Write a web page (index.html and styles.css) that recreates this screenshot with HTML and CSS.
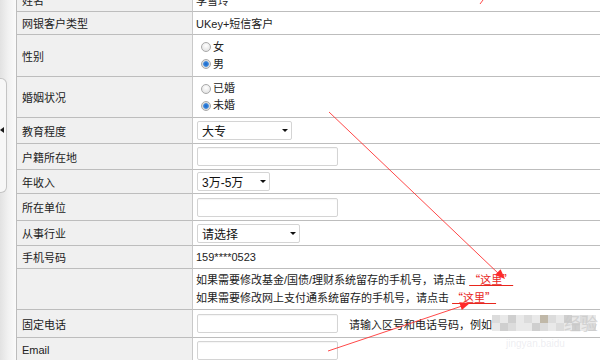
FILE: index.html
```html
<!DOCTYPE html>
<html lang="zh-CN">
<head>
<meta charset="utf-8">
<title>个人信息</title>
<link rel="stylesheet" href="styles.css">
</head>
<body>
<div class="page">
  <div class="side"><div class="tab"><span class="tab-arrow"></span></div></div>
  <div class="form">
    <div class="lbl">姓名</div><div class="val">李雪玲</div>
    <div class="lbl">网银客户类型</div><div class="val">UKey+短信客户</div>
    <div class="lbl">性别</div>
    <div class="val stack">
      <div class="radio"><span class="dot"></span>女</div>
      <div class="radio"><span class="dot on"></span>男</div>
    </div>
    <div class="lbl">婚姻状况</div>
    <div class="val stack">
      <div class="radio"><span class="dot"></span>已婚</div>
      <div class="radio"><span class="dot on"></span>未婚</div>
    </div>
    <div class="lbl">教育程度</div>
    <div class="val"><div class="select w95"><span>大专</span><span class="caret"></span></div></div>
    <div class="lbl">户籍所在地</div>
    <div class="val"><div class="input"></div></div>
    <div class="lbl">年收入</div>
    <div class="val"><div class="select w73"><span>3万-5万</span><span class="caret"></span></div></div>
    <div class="lbl">所在单位</div>
    <div class="val"><div class="input"></div></div>
    <div class="lbl">从事行业</div>
    <div class="val"><div class="select w103"><span>请选择</span><span class="caret"></span></div></div>
    <div class="lbl">手机号码</div><div class="val">159****0523</div>
    <div class="lbl"></div>
    <div class="val stack notes">
      <div>如果需要修改基金/国债/理财系统留存的手机号，请点击 <a class="here">“这里”</a></div>
      <div>如果需要修改网上支付通系统留存的手机号，请点击 <a class="here">“这里”</a></div>
    </div>
    <div class="lbl">固定电话</div>
    <div class="val"><div class="input"></div><span class="hint">请输入区号和电话号码，例如</span></div>
    <div class="lbl">Email</div>
    <div class="val"><div class="input"></div></div>
  </div>
</div>
<div class="watermark">
  <div class="mosaic">
    <span class="m2"></span><span class="m1"></span><span class="m3"></span><span class="m1"></span><span class="m2"></span><span class="m1"></span><span class="m4"></span><span class="m2"></span><span class="m1"></span><span class="m3"></span><span class="m1"></span><span class="m2"></span><span class="m1"></span>
    <span class="m1"></span><span class="m3"></span><span class="m2"></span><span class="m1"></span><span class="m1"></span><span class="m3"></span><span class="m2"></span><span class="m1"></span><span class="m2"></span><span class="m1"></span><span class="m3"></span><span class="m1"></span><span class="m2"></span>
  </div>
  <span class="wm-big">经验</span>
  <span class="wm-small">jingyan.baidu</span>
</div>
<svg class="marks" width="600" height="360" viewBox="0 0 600 360">
  <g stroke="#ff2a2a" stroke-width="1" fill="none" opacity="0.85">
    <line x1="483" y1="0" x2="480" y2="4"/>
    <line x1="329" y1="112" x2="500" y2="275"/>
    <line x1="328" y1="351" x2="462" y2="306"/>
  </g>
  <polygon points="505,279 495,275 500.6,269.2" fill="#ff2a2a"/>
  <polygon points="470,303 461.8,309.9 459.2,302.3" fill="#ff2a2a"/>
</svg>
</body>
</html>
```

FILE: styles.css
```css
html, body {
  margin: 0;
  padding: 0;
}
body {
  width: 600px;
  height: 360px;
  overflow: hidden;
  position: relative;
  background: #fff;
  font-family: "Liberation Sans", "Noto Sans CJK SC", sans-serif;
  font-size: 11px;
  color: #222;
}
.page {
  display: flex;
  height: 360px;
  overflow: hidden;
}
.side {
  width: 16px;
  flex: none;
  background: linear-gradient(to right, #e2e2e2 0, #f1f1f1 8px, #fbfbfb 16px);
  display: flex;
  flex-direction: column;
}
.tab {
  margin-top: 78px;
  width: 7px;
  height: 115px;
  box-sizing: border-box;
  border: 1px solid #c4c4c4;
  border-left: none;
  border-radius: 0 6px 6px 0;
  background: #f7f7f7;
  display: flex;
  flex-direction: column;
}
.tab-arrow {
  margin-top: 48px;
  width: 0;
  height: 0;
  border-right: 4px solid #1a1a1a;
  border-top: 3.5px solid transparent;
  border-bottom: 3.5px solid transparent;
}
.form {
  flex: 1;
  align-self: flex-start;
  margin-top: -11px;
  display: grid;
  grid-template-columns: 176px 1fr;
  grid-template-rows: 23px 23px 42px 41px 26px 26px 24px 27px 25px 23px 41px 28px 25px;
  border-left: 1px solid #bdbdbd;
}
.lbl, .val {
  box-sizing: border-box;
  border-bottom: 1px solid #bdbdbd;
  display: flex;
  align-items: center;
}
.lbl {
  background: #f0f0f0;
  border-right: 1px solid #c9c9c9;
  padding-left: 5px;
}
.val {
  padding-left: 3px;
}
.stack {
  flex-direction: column;
  align-items: flex-start;
  justify-content: center;
  line-height: 17px;
}
.radio {
  display: flex;
  align-items: center;
  padding-left: 5px;
  font-size: 11px;
}
.dot {
  width: 10px;
  height: 10px;
  box-sizing: border-box;
  border-radius: 50%;
  border: 1px solid #a9a9a9;
  background: radial-gradient(circle at 50% 35%, #ffffff 0, #e4e4e4 5px);
  margin-right: 2px;
}
.dot.on {
  background: radial-gradient(circle at 50% 50%, #1a63c4 0, #3b8ae0 2.4px, #d8d8d8 3.2px, #f3f3f3 5px);
}
.input {
  width: 141px;
  height: 19px;
  box-sizing: border-box;
  margin-left: 1px;
  border: 1px solid #d4d4d4;
  border-radius: 2px;
  box-shadow: inset 0 1px 1px rgba(0, 0, 0, 0.04);
}
.select {
  height: 19px;
  box-sizing: border-box;
  margin-left: 1px;
  border: 1px solid #d4d4d4;
  border-radius: 2px;
  display: flex;
  align-items: center;
  justify-content: space-between;
  padding: 0 3px 0 4px;
  font-size: 12px;
  color: #111;
}
.w95 { width: 95px; }
.w73 { width: 73px; }
.w103 { width: 103px; }
.caret {
  width: 0;
  height: 0;
  border-left: 3px solid transparent;
  border-right: 3px solid transparent;
  border-top: 3.5px solid #111;
}
.notes {
  color: #222;
}
.here {
  color: #e8261c;
  text-decoration: underline;
  font-family: "Noto Sans CJK SC", sans-serif;
}
.hint {
  margin-left: 11px;
  color: #222;
}
.watermark {
  position: absolute;
  left: 492px;
  top: 300px;
  width: 108px;
  height: 60px;
  pointer-events: none;
}
.mosaic {
  position: absolute;
  left: 0;
  top: 15px;
  display: grid;
  grid-template-columns: repeat(13, 8px);
  grid-auto-rows: 8px;
}
.m1 { background: #e9e9e9; }
.m2 { background: #dcdcdc; }
.m3 { background: #cfcfcf; }
.m4 { background: #c0b8a8; }
.wm-big {
  position: absolute;
  left: 72px;
  top: 10px;
  font-family: "Noto Sans CJK SC", sans-serif;
  font-size: 17px;
  color: rgba(200, 200, 200, 0.7);
}
.wm-small {
  position: absolute;
  left: 14px;
  top: 38px;
  font-size: 10px;
  color: rgba(215, 215, 225, 0.45);
}
.marks {
  position: absolute;
  left: 0;
  top: 0;
  pointer-events: none;
}
```
